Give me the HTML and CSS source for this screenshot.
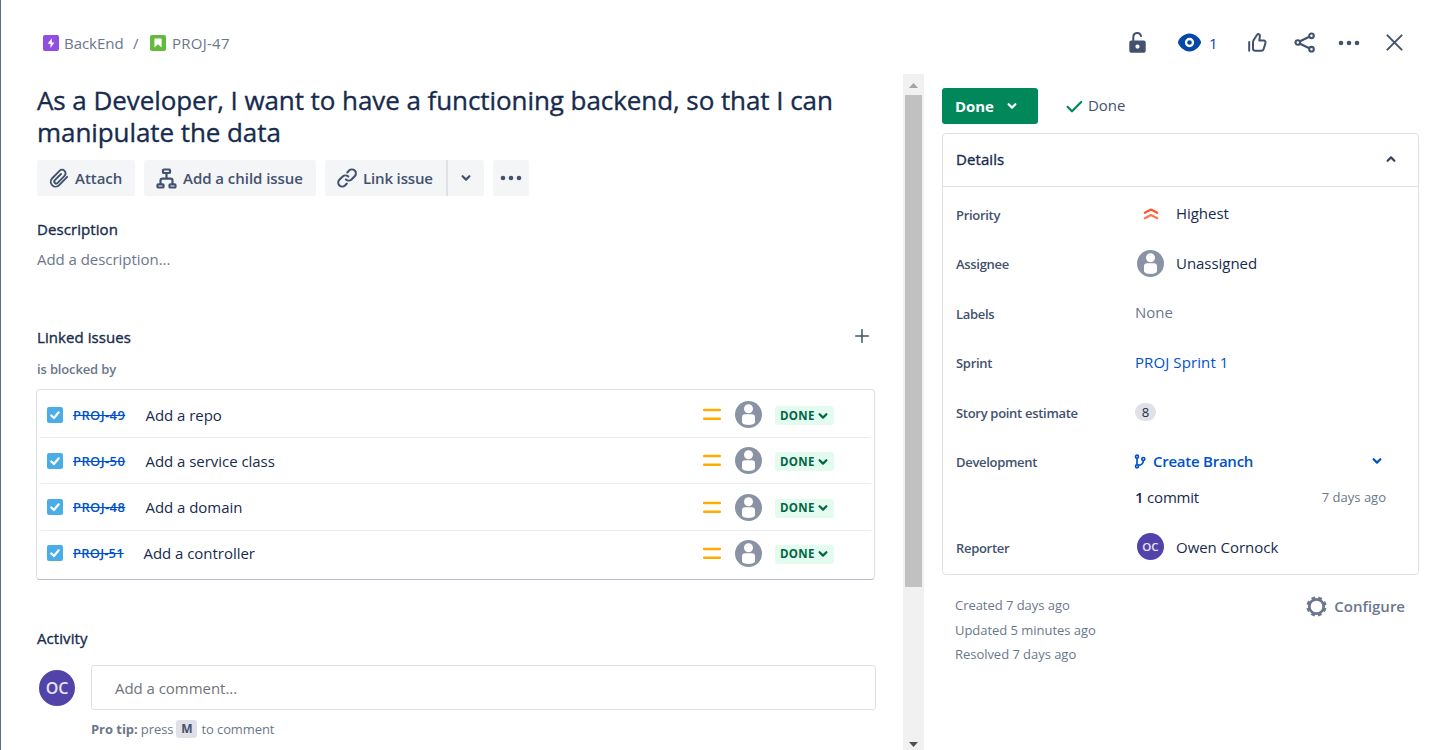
FILE: index.html
```html
<!DOCTYPE html>
<html lang="en">
<head>
<meta charset="utf-8">
<title>PROJ-47</title>
<link rel="stylesheet" href="styles.css">
</head>
<body>
<svg class="sprite" aria-hidden="true">
  <symbol id="person" viewBox="0 0 27 27">
    <circle cx="13.5" cy="13.5" r="13.5" fill="#8993a4"/>
    <circle cx="13.5" cy="7.8" r="4.5" fill="#fff"/>
    <path d="M7 16.2a3 3 0 0 1 3-3h7a3 3 0 0 1 3 3V21c0 1.900-3.200 2.900-6.500 2.900S7 22.900 7 21z" fill="#fff"/>
  </symbol>
  <symbol id="chev" viewBox="0 0 10 8"><path d="M1.600 2.200 5 5.600l3.400-3.400" fill="none" stroke="currentColor" stroke-width="2.200" stroke-linecap="round" stroke-linejoin="round"/></symbol>
  <symbol id="task" viewBox="0 0 16 16"><rect width="16" height="16" rx="2" fill="#4bade8"/><path d="M4.300 8.500 6.900 11l4.800-5.700" fill="none" stroke="#fff" stroke-width="2.200" stroke-linecap="round" stroke-linejoin="round"/></symbol>
  <symbol id="medium" viewBox="0 0 18 13"><path d="M1.200 2h15.600M1.200 10.700h15.600" stroke="#ffab00" stroke-width="2.500" stroke-linecap="round"/></symbol>
  <symbol id="dots" viewBox="0 0 24 8"><g fill="currentColor"><circle cx="4" cy="4" r="2.300"/><circle cx="12" cy="4" r="2.300"/><circle cx="20" cy="4" r="2.300"/></g></symbol>
</svg>
<div class="modal">
  <header class="topbar">
    <nav class="crumbs">
      <svg class="i16" viewBox="0 0 16 16"><rect width="16" height="16" rx="2" fill="#904ee2"/><path d="M8.800 3.300 4.600 8.700h2.900v4.200l4-5.400H8.800z" fill="#fff"/></svg>
      <span class="crumb-a">BackEnd</span>
      <span class="slash">/</span>
      <svg class="i16" viewBox="0 0 16 16"><rect width="16" height="16" rx="2" fill="#63ba3c"/><path d="M5 3.500h6a.6.6 0 0 1 .6.6v8.300L8 9.200l-3.600 3.200V4.100a.6.6 0 0 1 .6-.6z" fill="#fff"/></svg>
      <span class="crumb-b">PROJ-47</span>
    </nav>
    <div class="actions">
      <svg class="i27 lock" viewBox="0 0 27 27"><path d="M9.300 12.500V7.900a3.900 3.900 0 0 1 7.700-.8" fill="none" stroke="currentColor" stroke-width="2" stroke-linecap="round"/><path fill-rule="evenodd" d="M7.300 11.500h12.400a2 2 0 0 1 2 2v7.700a2.600 2.600 0 0 1-2.600 2.600H7.900a2.600 2.600 0 0 1-2.600-2.600v-7.700a2 2 0 0 1 2-2zM13.500 15.500a2.100 2.100 0 1 0 0 4.200 2.100 2.100 0 0 0 0-4.200z" fill="currentColor"/></svg>
      <svg class="i27 eye" viewBox="0 0 27 27"><path d="M13.500 4.500C7.500 4.500 2 10.500 2 13.300S7.500 22.500 13.500 22.500 25 16.100 25 13.300 19.500 4.500 13.500 4.500z" fill="currentColor"/><circle cx="13.500" cy="13.500" r="3.500" fill="none" stroke="#fff" stroke-width="2.300"/></svg>
      <span class="watch">1</span>
      <svg class="i27 thumb" viewBox="0 0 27 27" fill="none" stroke="currentColor" stroke-width="2" stroke-linecap="round" stroke-linejoin="round"><path d="M5.200 13v8.700M9 13.300v6.200a2.300 2.300 0 0 0 2.300 2.300h6.100a2.400 2.400 0 0 0 2.200-1.600l1.800-6c.5-1.600-.4-2.700-1.800-2.700h-4.300l.6-4.400c.3-1.800-2-2.600-2.800-1.300L9.700 11c-.4.700-.7 1.400-.7 2.300z"/></svg>
      <svg class="i27 share" viewBox="0 0 27 27" fill="none" stroke="currentColor" stroke-width="2.100"><circle cx="6.800" cy="13.500" r="2.300"/><circle cx="20.500" cy="6.800" r="2.300"/><circle cx="20.500" cy="20.200" r="2.300"/><path d="m9 12.300 9.300-4.500M9 14.700l9.300 4.500"/></svg>
      <svg class="dots" viewBox="0 0 24 8"><use href="#dots"/></svg>
      <svg class="i27 close" viewBox="0 0 27 27"><path d="m6.400 6.400 14.200 14.200M20.600 6.400 6.400 20.600" stroke="currentColor" stroke-width="2" stroke-linecap="round"/></svg>
    </div>
  </header>
  <div class="columns">
    <main class="main">
      <h1 class="title">As a Developer, I want to have a functioning backend, so that I can<br>manipulate the data</h1>
      <div class="toolbar">
        <button class="btn attach"><svg class="i20" viewBox="0 0 20 21" fill="none" stroke="currentColor" stroke-width="2" stroke-linecap="round"><path d="m18.600 9.300-8.400 8.600a5 5 0 0 1-7.500-6.900l7.800-8a3.700 3.700 0 0 1 5.300 5.300l-7.200 7.400a2 2 0 0 1-2.900-2.900l6.400-6.500"/></svg><span>Attach</span></button>
        <button class="btn child"><svg class="i21" viewBox="0 0 21 21" fill="none" stroke="currentColor" stroke-width="2.200"><rect x="7" y="1.500" width="7" height="3.500" rx=".8"/><rect x="1.500" y="16.300" width="6" height="3.200" rx=".8"/><rect x="13.500" y="16.300" width="6" height="3.200" rx=".8"/><path d="M10.500 5v5.500M4.500 16.500v-3.800a2 2 0 0 1 2-2h8a2 2 0 0 1 2 2v3.800"/></svg><span>Add a child issue</span></button>
        <div class="split">
          <button class="btn link"><svg class="i20" viewBox="0 0 20 20" fill="none" stroke="currentColor" stroke-width="2.100" stroke-linecap="round"><path d="M8.900 11.400a4 4 0 0 0 5.600 0l3.200-3.200a3.900 3.900 0 0 0-5.600-5.600L10.300 4.400M11.300 8.600a4 4 0 0 0-5.600 0l-3.300 3.200a3.900 3.900 0 0 0 5.600 5.600l1.900-1.800"/></svg><span>Link issue</span></button>
          <button class="btn drop"><svg class="c10" viewBox="0 0 10 8"><use href="#chev"/></svg></button>
        </div>
        <button class="btn more"><svg class="dots" viewBox="0 0 24 8"><use href="#dots"/></svg></button>
      </div>
      <h2 class="h2 desc-h">Description</h2>
      <p class="desc">Add a description...</p>
      <div class="linked-head"><h2 class="h2">Linked issues</h2><svg class="plus" viewBox="0 0 14 14"><path d="M7 .7v12.600M.7 7h12.600" stroke="#42526e" stroke-width="1.500" stroke-linecap="round"/></svg></div>
      <h3 class="blocked">is blocked by</h3>
      <ul class="issues">
        <li class="issue"><svg class="i16" viewBox="0 0 16 16"><use href="#task"/></svg><a class="key">PROJ-49</a><span class="sum">Add a repo</span><svg class="prio" viewBox="0 0 18 13"><use href="#medium"/></svg><svg class="av27" viewBox="0 0 27 27"><use href="#person"/></svg><span class="badge"><span>DONE</span><svg class="c10" viewBox="0 0 10 8"><use href="#chev"/></svg></span></li>
        <li class="issue"><svg class="i16" viewBox="0 0 16 16"><use href="#task"/></svg><a class="key">PROJ-50</a><span class="sum">Add a service class</span><svg class="prio" viewBox="0 0 18 13"><use href="#medium"/></svg><svg class="av27" viewBox="0 0 27 27"><use href="#person"/></svg><span class="badge"><span>DONE</span><svg class="c10" viewBox="0 0 10 8"><use href="#chev"/></svg></span></li>
        <li class="issue tall"><svg class="i16" viewBox="0 0 16 16"><use href="#task"/></svg><a class="key">PROJ-48</a><span class="sum">Add a domain</span><svg class="prio" viewBox="0 0 18 13"><use href="#medium"/></svg><svg class="av27" viewBox="0 0 27 27"><use href="#person"/></svg><span class="badge"><span>DONE</span><svg class="c10" viewBox="0 0 10 8"><use href="#chev"/></svg></span></li>
        <li class="issue last"><svg class="i16" viewBox="0 0 16 16"><use href="#task"/></svg><a class="key short">PROJ-51</a><span class="sum">Add a controller</span><svg class="prio" viewBox="0 0 18 13"><use href="#medium"/></svg><svg class="av27" viewBox="0 0 27 27"><use href="#person"/></svg><span class="badge"><span>DONE</span><svg class="c10" viewBox="0 0 10 8"><use href="#chev"/></svg></span></li>
      </ul>
      <h2 class="h2 activity-h">Activity</h2>
      <div class="comment">
        <span class="oc oc-lg">OC</span>
        <div class="comment-body">
          <div class="comment-box">Add a comment...</div>
          <p class="tip"><b>Pro tip:</b><span class="press">press</span><kbd>M</kbd><span>to comment</span></p>
        </div>
      </div>
    </main>
    <div class="scroll">
      <svg class="arrow" viewBox="0 0 9 5"><path d="M0 5 4.500 0 9 5z" fill="#a3a3a3"/></svg>
      <div class="thumb-bar"></div>
      <svg class="arrow down" viewBox="0 0 9 5"><path d="M0 0h9L4.500 5z" fill="#505050"/></svg>
    </div>
    <aside class="side">
      <div class="status">
        <button class="status-btn"><span>Done</span><svg class="c10" viewBox="0 0 10 8"><use href="#chev"/></svg></button>
        <svg class="check" viewBox="0 0 17 13"><path d="m1.700 6.900 4.300 4.400 9.200-9.300" fill="none" stroke="#00875a" stroke-width="2.200" stroke-linecap="round" stroke-linejoin="round"/></svg>
        <span class="resolved">Done</span>
      </div>
      <section class="card">
        <div class="card-head"><span class="h2 details">Details</span><svg class="c10 up" viewBox="0 0 10 8"><use href="#chev"/></svg></div>
        <dl class="fields">
          <div class="field"><dt>Priority</dt><dd class="pad"><svg class="highest" viewBox="0 0 16 12" fill="none" stroke-width="2.200" stroke-linecap="round" stroke-linejoin="round"><path d="M1.800 4.800 8 1.600l6.200 3.200" stroke="#ff5630"/><path d="M1.800 10.200 8 7l6.200 3.200" stroke="#ff7452"/></svg><span class="raise">Highest</span></dd></div>
          <div class="field"><dt>Assignee</dt><dd class="pad"><svg class="av27" viewBox="0 0 27 27"><use href="#person"/></svg><span>Unassigned</span></dd></div>
          <div class="field"><dt>Labels</dt><dd><span class="none raise">None</span></dd></div>
          <div class="field"><dt>Sprint</dt><dd><span class="sprint">PROJ Sprint 1</span></dd></div>
          <div class="field"><dt>Story point estimate</dt><dd><span class="points">8</span></dd></div>
          <div class="field"><dt>Development</dt><dd class="dev"><svg class="branch" viewBox="0 0 12 15" fill="none" stroke="currentColor" stroke-width="1.700"><circle cx="3" cy="2.700" r="1.500"/><circle cx="3" cy="12.300" r="1.500"/><circle cx="9.300" cy="5" r="1.500"/><path d="M3 4.400v6.200M9.300 6.700c0 2.500-1.800 4.500-5.300 4.500"/></svg><span class="create">Create Branch</span><svg class="c10 devchev" viewBox="0 0 10 8"><use href="#chev"/></svg></dd></div>
          <div class="field commit"><dt></dt><dd><span><b>1</b> commit</span><span class="ago">7 days ago</span></dd></div>
          <div class="field reporter"><dt>Reporter</dt><dd class="pad"><span class="oc oc-sm">OC</span><span>Owen Cornock</span></dd></div>
        </dl>
      </section>
      <div class="foot">
        <div class="dates"><div>Created 7 days ago</div><div>Updated 5 minutes ago</div><div>Resolved 7 days ago</div></div>
        <div class="config"><svg class="i21" viewBox="0 0 21 21" fill="none" stroke="currentColor"><circle cx="10.500" cy="10.500" r="7.200" stroke-width="2.700"/><circle cx="10.500" cy="10.500" r="8.800" stroke-width="2.600" stroke-dasharray="3.700 3.211" stroke-dashoffset="-1.606"/></svg><span>Configure</span></div>
      </div>
    </aside>
  </div>
</div>
</body>
</html>
```
FILE: styles.css
```css
* { box-sizing: border-box; }
body {
  margin: 0;
  background: #fff;
  color: #172b4d;
  font: 400 15px/24px "Open Sans", "Noto Sans", sans-serif;
  letter-spacing: -0.04px;
}
h1, h2, h3, p, ul, dl, dt, dd { margin: 0; padding: 0; font-size: inherit; font-weight: inherit; }
svg { display: block; flex: none; }
span, a, dt { white-space: nowrap; }
button { font: inherit; border: 0; margin: 0; padding: 0; }
.sprite { display: none; }
.i16 { width: 16px; height: 16px; }
.i20 { width: 20px; height: 20px; }
.i21 { width: 21px; height: 21px; }
.i27 { width: 27px; height: 27px; }
.av27 { width: 27px; height: 27px; }
.c10 { width: 10px; height: 8px; }
.dots { width: 24px; height: 8px; }

.modal { height: 750px; border-left: 1px solid #5e6c84; overflow: hidden; display: flex; flex-direction: column; }
.topbar { height: 74px; flex: none; display: flex; justify-content: space-between; padding: 29px 32px 0 42px; }
.crumbs { display: flex; align-items: center; height: 28px; color: #6b778c; }
.crumb-a { width: 69px; padding-left: 5px; }
.slash { width: 17px; margin-left: 5px; }
.crumb-b { padding-left: 6px; letter-spacing: 0.250px; }
.actions { display: flex; align-items: center; height: 27px; color: #42526e; }
.eye { margin-left: 25px; color: #0747a6; }
.watch { width: 10px; margin-left: 6px; color: #0747a6; }
.thumb { margin-left: 25px; }
.share { margin-left: 20px; }
.actions .dots { margin-left: 19px; }
.close { margin-left: 20px; }

.columns { flex: 1; display: flex; min-height: 0; }
.main { width: 902px; flex: none; padding: 10px 27px 0 36px; }
.title { font-size: 26px; line-height: 32px; font-weight: 500; letter-spacing: -0.070px; white-space: nowrap; -webkit-text-stroke: 0.350px #172b4d; }
.toolbar { display: flex; gap: 9px; margin-top: 12px; }
.btn { display: flex; align-items: center; justify-content: flex-start; height: 36px; background: #f4f5f7; border-radius: 3px; color: #42526e; font-weight: 600; letter-spacing: -0.040px; padding-left: 12px; gap: 6px; }
.attach { width: 98px; }
.child { width: 172px; }
.split { display: flex; }
.link { width: 121px; border-radius: 3px 0 0 3px; letter-spacing: -0.150px; }
.drop { width: 38px; border-left: 2px solid #dfe1e6; border-radius: 0 3px 3px 0; padding-left: 13px; }
.more { width: 36px; padding-left: 6px; }
.h2 { font-weight: 500; letter-spacing: 0.080px; -webkit-text-stroke: 0.350px #172b4d; }
.desc-h { margin-top: 21px; }
.desc { margin-top: 6px; color: #6b778c; }
.linked-head { display: flex; align-items: center; justify-content: space-between; margin-top: 54px; padding-right: 7px; }
.plus { width: 14px; height: 14px; margin-top: -2px; }
.blocked { margin-top: 10px; font-size: 13px; line-height: 20px; font-weight: 600; letter-spacing: -0.150px; color: #6b778c; }
.issues { list-style: none; width: 839px; height: 191px; margin: 10px 0 0 -1px; padding: 2px 2px 0; border: 1px solid #dfe1e6; border-bottom-color: #b3bac5; border-radius: 4px; }
.issue { display: flex; align-items: center; height: 46px; padding-left: 8px; border-bottom: 1px solid #ebecf0; border-radius: 3px; }
.tall { height: 47px; }
.last { height: 44px; border-bottom: 0; }
.key { width: 82.500px; flex: none; padding-left: 10px; font-size: 13px; font-weight: 600; letter-spacing: 0.400px; color: #0052cc; text-decoration: line-through; }
.short { width: 80.500px; letter-spacing: 0.200px; }
.sum { flex: 1; }
.prio { width: 18px; height: 13px; margin-right: 14px; }
.badge { display: flex; align-items: center; width: 59px; height: 19px; margin: 2px 38px 0 13px; padding-left: 5px; gap: 3px; background: #e3fcef; border-radius: 3px; color: #006644; font-size: 11.500px; font-weight: 700; letter-spacing: 0.300px; }
.activity-h { margin-top: 46px; }
.comment { display: flex; margin-top: 15px; padding-left: 2px; }
.oc { display: flex; align-items: center; justify-content: center; border-radius: 50%; background: #5243aa; color: #e9e6f6; font-weight: 600; flex: none; }
.oc-lg { width: 36px; height: 36px; margin: 5px 16px 0 0; font-size: 16px; }
.oc-sm { width: 27px; height: 27px; font-size: 11.500px; }
.comment-body { width: 785px; }
.comment-box { height: 45px; border: 1px solid #dfe1e6; border-radius: 3px; padding: 10px 0 0 23px; color: #6f747c; }
.tip { display: flex; align-items: center; height: 20px; margin-top: 9px; font-size: 13px; color: #6b778c; }
.tip b { font-weight: 700; }
.press { margin-left: 3px; }
.tip kbd { width: 21px; height: 18px; margin: 0 4px 0 3px; border-radius: 3px; background: #dfe1e6; color: #42526e; font: 700 12px/18px "Open Sans", sans-serif; text-align: center; }
.tip kbd + span { letter-spacing: -0.100px; }

.scroll { width: 21px; flex: none; background: #f1f1f1; display: flex; flex-direction: column; align-items: center; padding: 9px 0 3px; }
.arrow { width: 9px; height: 5px; }
.thumb-bar { width: 17px; height: 492px; margin-top: 7px; background: #c1c1c1; }
.down { margin-top: auto; }

.side { width: 495px; padding: 14px 0 0 18px; }
.status { display: flex; height: 36px; align-items: center; }
.status-btn { display: flex; align-items: center; width: 96px; height: 36px; padding-left: 13px; background: #00875a; color: #fff; border-radius: 3px; font-weight: 700; letter-spacing: -0.100px; }
.status-btn .c10 { margin-left: 13px; }
.check { width: 17px; height: 13px; margin-left: 28px; }
.resolved { margin-left: 5px; padding-bottom: 2px; color: #42526e; }
.card { width: 477px; height: 442px; margin-top: 9px; border: 1px solid #dfe1e6; border-radius: 4px; }
.card-head { display: flex; align-items: center; justify-content: space-between; height: 53px; padding: 0 22px 2px 13px; border-bottom: 1px solid #dfe1e6; color: #344563; }
.details { color: #172b4d; }
.up { transform: rotate(180deg); }
.fields { padding: 2px 32px 0 13px; }
.field { display: flex; align-items: center; height: 49.500px; }
.field dt { width: 179px; padding-top: 2px; font-size: 13px; font-weight: 600; letter-spacing: -0.300px; color: #42526e; }
.field dd { flex: 1; display: flex; align-items: center; }
.pad { padding-left: 2px; }
.pad span:last-child { margin-left: 12px; }
.raise { padding-bottom: 2px; }
.highest { width: 16px; height: 12px; margin: 0 5px 0 6px; }
.none { color: #6b778c; }
.sprint { color: #0052cc; letter-spacing: 0.100px; }
.points { width: 21px; height: 18px; border-radius: 9px; background: #dfe1e6; font-size: 13px; line-height: 18px; text-align: center; }
.dev { color: #0052cc; }
.branch { width: 12px; height: 15px; margin: 0 7px 0 -1px; }
.create { font-weight: 600; letter-spacing: -0.250px; }
.devchev { margin-left: auto; margin-right: 4px; }
.commit { height: 22px; letter-spacing: -0.200px; }
.commit b { font-weight: 600; }
.ago { margin-left: auto; font-size: 13px; letter-spacing: 0; color: #6b778c; }
.reporter { margin-top: 14px; height: 49px; }
.foot { display: flex; justify-content: space-between; width: 463px; padding: 18px 0 0 13px; color: #6b778c; }
.dates { font-size: 13px; line-height: 24.500px; }
.config { display: flex; align-items: center; gap: 7px; height: 26px; font-weight: 600; letter-spacing: 0; }
```
